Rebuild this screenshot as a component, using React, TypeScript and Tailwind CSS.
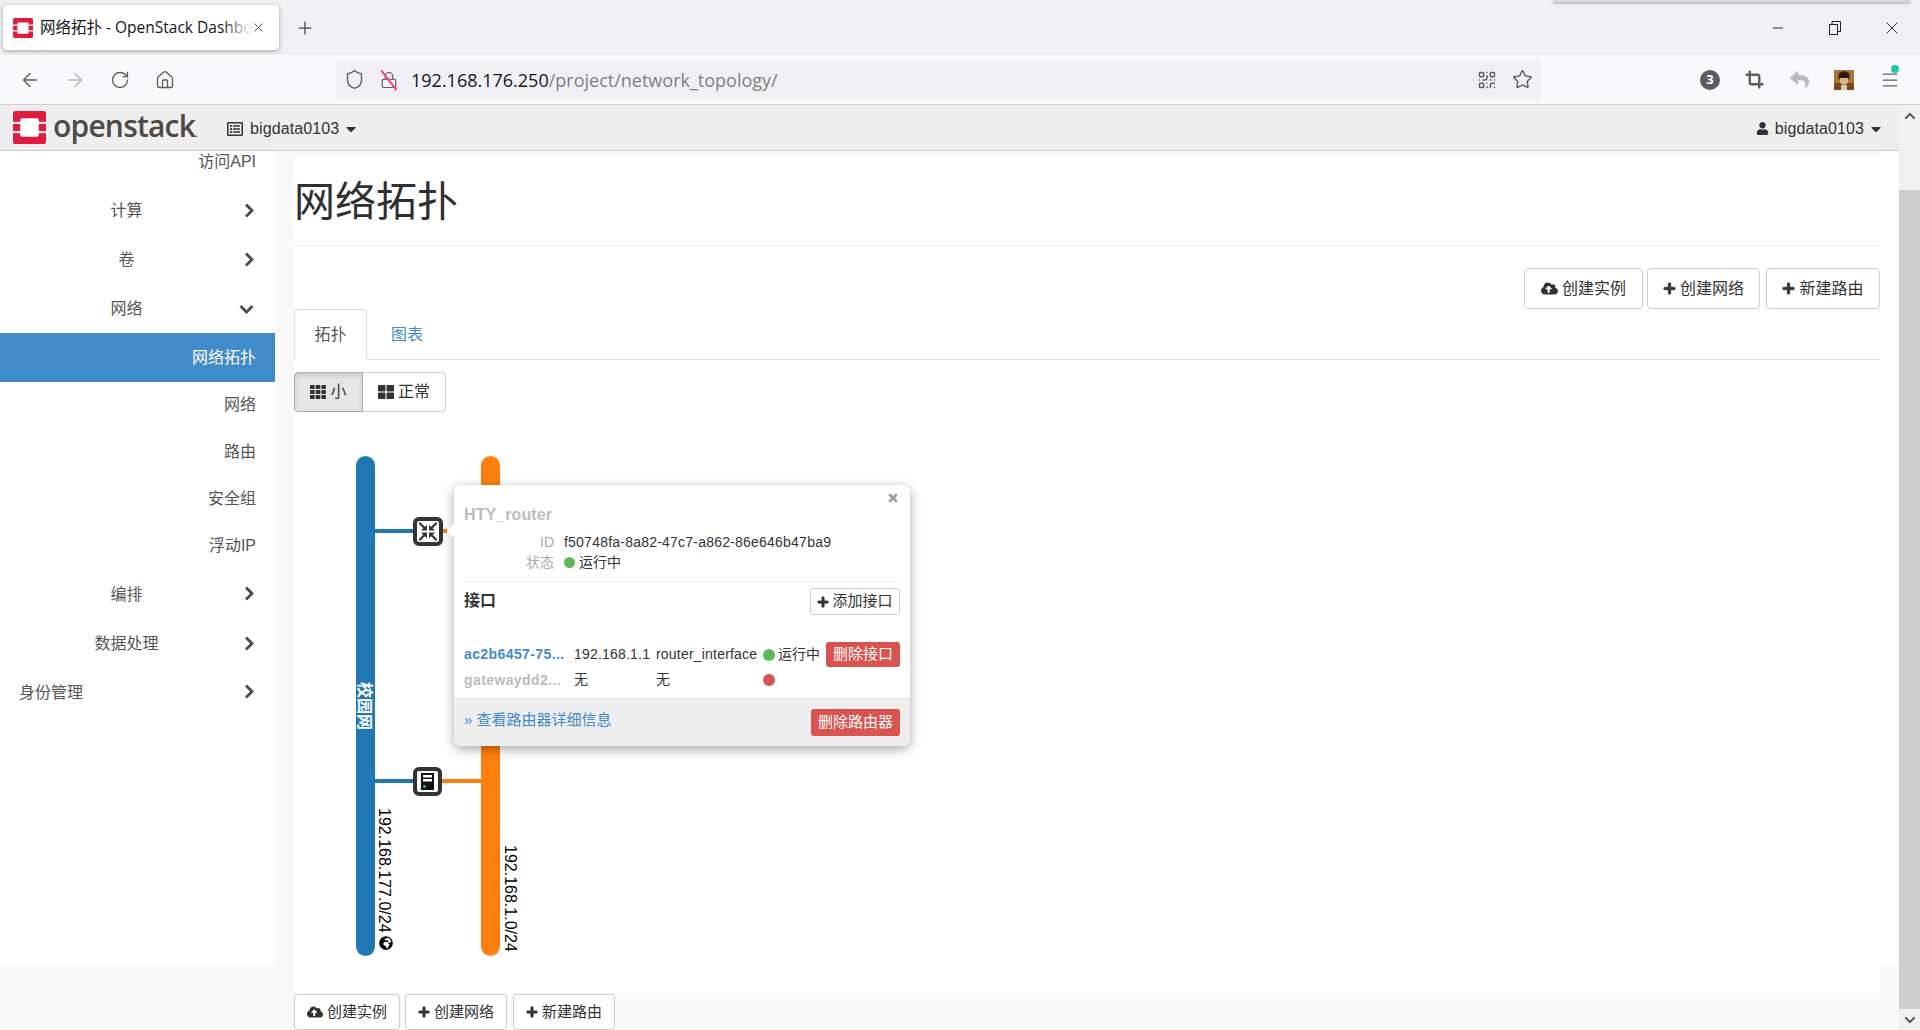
import React from "react";
import { ArrowLeft, ArrowRight, RotateCw, Home, Shield, Lock, Star, Plus, X, Minus, QrCode, Crop, Menu } from "lucide-react";
import { FaCloudUploadAlt, FaPlus, FaTh, FaThLarge, FaChevronRight, FaChevronDown, FaChevronUp, FaUser, FaCaretDown, FaTimes, FaGlobeAfrica, FaReply, FaRegListAlt } from "react-icons/fa";

const SANS = "font-['Liberation_Sans','Noto_Sans_CJK_SC',sans-serif]";

function Logo({ size }: { size: number }) {
  return (
    <svg width={size} height={size} viewBox="0 0 32 32" className="shrink-0">
      <rect width="32" height="32" rx="2.5" fill="#e21b3c" />
      <rect x="7" y="7" width="18" height="18" rx="2" fill="#fff" />
      <rect x="0" y="10.5" width="7" height="2" fill="#fff" />
      <rect x="0" y="19.5" width="7" height="2" fill="#fff" />
      <rect x="25" y="10.5" width="7" height="2" fill="#fff" />
      <rect x="25" y="19.5" width="7" height="2" fill="#fff" />
    </svg>
  );
}

function Avatar() {
  return (
    <svg width="20" height="20" viewBox="0 0 20 20" className="shrink-0">
      <rect width="20" height="20" fill="#a8772f" />
      <rect y="13" width="20" height="7" fill="#7a4a1c" />
      <path d="M4 10 L5 3 L10 1 L15 3 L16 10 L14 8 L6 8 Z" fill="#2b1a12" />
      <path d="M6 8 H14 V13 L10 15 L6 13 Z" fill="#d9b48f" />
      <rect x="7" y="15" width="6" height="5" fill="#d8c8a0" />
    </svg>
  );
}

function RouterIcon() {
  return (
    <div className="w-[30px] h-[29px] rounded-[6px] border-[4px] border-[#333] bg-white flex items-center justify-center">
      <svg width="20" height="19" viewBox="0 0 18 18" fill="#333">
        <path d="M1.5 0 L6 4.5 L8 2.5 V8 H2.5 L4.5 6 L0 1.5 Z" />
        <path d="M16.5 0 L12 4.5 L10 2.5 V8 H15.5 L13.5 6 L18 1.5 Z" />
        <path d="M1.5 18 L6 13.5 L8 15.5 V10 H2.5 L4.5 12 L0 16.5 Z" />
        <path d="M16.5 18 L12 13.5 L10 15.5 V10 H15.5 L13.5 12 L18 16.5 Z" />
      </svg>
    </div>
  );
}

function ServerIcon() {
  return (
    <div className="w-[29px] h-[29px] rounded-[6px] border-[4px] border-[#333] bg-white flex items-center justify-center">
      <svg width="13" height="17" viewBox="0 0 13 17">
        <rect width="13" height="17" fill="#111" />
        <rect x="2" y="2" width="9" height="2.5" fill="#fff" />
        <rect x="2" y="6" width="9" height="2.5" fill="#fff" />
        <circle cx="3.5" cy="13.5" r="1.4" fill="#5cb85c" />
      </svg>
    </div>
  );
}

function ThickPlus({ size }: { size: number }) {
  return <FaPlus size={size} stroke="currentColor" strokeWidth={30} />;
}

function Tab() {
  return (
    <div className="h-[55px] bg-[#f0f0f4] shrink-0 flex items-start relative">
      <div className="mt-[5px] ml-[3px] w-[276px] h-[45px] bg-white rounded-[4px] shadow-[0_1px_4px_rgba(0,0,0,0.35)] flex items-center pl-[10px] relative">
        <Logo size={20} />
        <div className="ml-[7px] w-[212px] overflow-hidden whitespace-nowrap text-[15.5px] text-[#15141a] font-['Open_Sans','Noto_Sans_CJK_SC',sans-serif] relative">
          网络拓扑 - OpenStack Dashbo
          <div className="absolute right-0 top-0 bottom-0 w-[30px] bg-gradient-to-r from-transparent to-white" />
        </div>
        <X size={15} strokeWidth={1.3} className="text-[#333] -ml-[1px]" />
      </div>
      <Plus size={20} strokeWidth={1.5} className="text-[#444] ml-[16px] mt-[18px]" />
      <div className="absolute top-0 left-[1553px] w-[357px] h-[2px] bg-[#d8d8d8] shadow-[0_1px_3px_rgba(0,0,0,0.4)]" />
      <div className="absolute top-0 right-0 h-[55px] flex items-center text-[#222]">
        <div className="w-[57px] flex justify-center"><Minus size={16} strokeWidth={1.4} /></div>
        <div className="w-[57px] flex justify-center">
          <svg width="12" height="14" viewBox="0 0 12 14" fill="none" stroke="#222" strokeWidth="1">
            <rect x="0.5" y="3.5" width="8" height="10" />
            <path d="M3 3.5 V0.5 H11.5 V10.5 H8.5" />
          </svg>
        </div>
        <div className="w-[57px] flex justify-center"><X size={20} strokeWidth={1.1} /></div>
      </div>
    </div>
  );
}

function Toolbar() {
  return (
    <div className="h-[50px] bg-[#f9f9fb] shrink-0 flex items-center border-b border-[#cfcfd2] text-[#5b5b66]">
      <ArrowLeft size={22} strokeWidth={1.5} className="ml-[19px]" />
      <ArrowRight size={22} strokeWidth={1.5} className="ml-[23px] text-[#b5b5bb]" />
      <RotateCw size={20} strokeWidth={1.6} className="ml-[24px]" />
      <Home size={20} strokeWidth={1.6} className="ml-[25px]" />
      <div className="ml-[160px] w-[1206px] h-[40px] bg-[#f0f0f4] rounded-[4px] flex items-center pl-[9px] pr-[8px]">
        <Shield size={21} strokeWidth={1.6} />
        <div className="relative ml-[14px] w-[20px] h-[20px] flex items-center justify-center">
          <Lock size={18} strokeWidth={1.6} />
          <div className="absolute left-[9px] top-[-2px] w-[1.5px] h-[25px] bg-[#ff3b6b] -rotate-[38deg]" />
        </div>
        <div className="ml-[12px] text-[18px] whitespace-nowrap font-['Open_Sans',sans-serif] leading-none">
          <span className="text-[#15141a]">192.168.176.250</span>
          <span className="text-[#7f7f86]">/project/network_topology/</span>
        </div>
        <div className="flex-1" />
        <QrCode size={20} strokeWidth={1.8} />
        <Star size={21} strokeWidth={1.6} className="ml-[15px]" />
      </div>
      <div className="ml-[159px] w-[20px] h-[20px] rounded-full bg-[#5b5b66] text-white text-[13px] font-bold flex items-center justify-center font-['Open_Sans',sans-serif]">3</div>
      <Crop size={19} strokeWidth={3} className="ml-[25px]" />
      <FaReply size={19} className="ml-[26px] text-[#b9b9bf]" />
      <div className="ml-[25px]"><Avatar /></div>
      <div className="relative ml-[26px]">
        <Menu size={20} strokeWidth={1.5} />
        <div className="absolute -top-[5px] left-[11px] w-[8px] h-[8px] rounded-full bg-[#1fc8a0]" />
      </div>
    </div>
  );
}

function NavBar() {
  return (
    <div className={`h-[46px] bg-[#eeeeee] shrink-0 flex items-center border-b border-[#c8c8c8] text-[#333] text-[16px] ${SANS}`}>
      <div className="ml-[13px]"><Logo size={33} /></div>
      <span className="ml-[7px] w-[142px] whitespace-nowrap text-[30px] leading-none tracking-[-0.8px] text-[#4e4a47] font-semibold font-['Open_Sans',sans-serif] -mt-[3px]">openstack<span className="text-[10px] align-baseline">.</span></span>
      <FaRegListAlt size={16} className="ml-[32px] mt-[2px] text-[#333]" />
      <span className="ml-[7px] mt-[2px] tracking-[0.1px]">bigdata0103</span>
      <FaCaretDown size={16} className="ml-[4px] mt-[2px]" />
      <div className="flex-1" />
      <FaUser size={13} className="mt-[2px]" />
      <span className="ml-[6px] mt-[2px] tracking-[0.1px]">bigdata0103</span>
      <FaCaretDown size={16} className="ml-[4px] mr-[15px] mt-[2px]" />
    </div>
  );
}

function SideTop({ label, h, open, left }: { label: string; h: string; open?: boolean; left?: boolean }) {
  return (
    <div className={`flex items-center pt-[1px] ${h}`}>
      <div className={`w-[253px] ${left ? "text-left pl-[19px]" : "text-center"}`}>{label}</div>
      {open ? (
        <FaChevronDown size={15} stroke="currentColor" strokeWidth={25} className="-ml-[14px] text-[#4a4a4a]" />
      ) : (
        <FaChevronRight size={15} stroke="currentColor" strokeWidth={25} className="-ml-[11px] -mt-[2px] text-[#4a4a4a]" />
      )}
    </div>
  );
}

function SideSub({ label, h, active }: { label: string; h: string; active?: boolean }) {
  return (
    <div className={`flex items-center justify-end pr-[19px] ${h} ${active ? "bg-[#428bca] text-white" : ""}`}>{label}</div>
  );
}

function Sidebar() {
  return (
    <div className="w-[294px] shrink-0 flex flex-col text-[#555] text-[16px]">
      <div className="w-[275px] h-[815px] bg-white flex flex-col">
        <SideSub label="访问API" h="h-[22px] mb-[13px]" />
        <SideTop label="计算" h="h-[49px]" />
        <SideTop label="卷" h="h-[49px]" />
        <SideTop label="网络" h="h-[49px]" open />
        <SideSub label="网络拓扑" h="h-[49px]" active />
        <SideSub label="网络" h="h-[46px]" />
        <SideSub label="路由" h="h-[47px]" />
        <SideSub label="安全组" h="h-[47px]" />
        <SideSub label="浮动IP" h="h-[47px]" />
        <SideTop label="编排" h="h-[50px]" />
        <SideTop label="数据处理" h="h-[49px]" />
        <SideTop label="身份管理" h="h-[48px]" left />
      </div>
    </div>
  );
}

function ActionBtn({ icon, label, cls }: { icon: React.ReactNode; label: string; cls: string }) {
  return (
    <div className={`flex items-center justify-center gap-[4px] bg-white border border-[#ccc] rounded-[4px] text-[#333] ${cls}`}>
      {icon}
      <span>{label}</span>
    </div>
  );
}

function Popover() {
  return (
    <div className="absolute left-[160px] top-[73px] w-[456px] h-[261px] bg-white rounded-[7px] shadow-[0_3px_12px_rgba(0,0,0,0.35)] flex flex-col text-[14px] text-[#333]">
      <div className="absolute -left-[5px] top-[41px] w-[10px] h-[10px] bg-white rotate-45" />
      <FaTimes size={12} stroke="currentColor" strokeWidth={25} className="absolute right-[11px] top-[7px] text-[#999]" />
      <div className="px-[10px] pt-[20px] flex flex-col relative">
        <div className="h-[20px] leading-[20px] text-[16px] font-bold text-[#bbb] tracking-[0.1px]">HTY_router</div>
        <div className="mt-[7px] h-[20px] flex items-center">
          <div className="w-[90px] text-right text-[#aaa]">ID</div>
          <div className="ml-[10px] tracking-[0.22px]">f50748fa-8a82-47c7-a862-86e646b47ba9</div>
        </div>
        <div className="h-[20px] flex items-center">
          <div className="w-[90px] text-right text-[#aaa]">状态</div>
          <div className="ml-[10px] w-[11px] h-[11px] rounded-full bg-[#5cb85c]" />
          <div className="ml-[4px]">运行中</div>
        </div>
        <div className="mt-[9px] border-t border-[#eee]" />
        <div className="mt-[6px] flex items-start justify-between">
          <div className="text-[16px] font-bold leading-[22px] mt-[2px]">接口</div>
          <div className="w-[90px] h-[27px] bg-white border border-[#ccc] rounded-[3px] flex items-center justify-center gap-[3px] text-[15px]">
            <ThickPlus size={12} />
            <span>添加接口</span>
          </div>
        </div>
        <div className="mt-[27px] grid grid-cols-[110px_82px_107px_63px_74px] items-center">
          <div className="h-[25px] flex items-center font-bold text-[#428bca] tracking-[0.4px]">ac2b6457-75...</div>
          <div className="tracking-[0.2px]">192.168.1.1</div>
          <div className="tracking-[0.2px]">router_interface</div>
          <div className="flex items-center">
            <div className="w-[12px] h-[12px] rounded-full bg-[#5cb85c]" />
            <span className="ml-[3px]">运行中</span>
          </div>
          <div className="h-[25px] bg-[#d9534f] text-white rounded-[3px] flex items-center justify-center text-[15px]">删除接口</div>
          <div className="h-[26px] flex items-center font-bold text-[#bbb] tracking-[0.4px]">gatewaydd2...</div>
          <div className="-mt-[2px]">无</div>
          <div className="-mt-[2px]">无</div>
          <div><div className="w-[12px] h-[12px] rounded-full bg-[#d9534f]" /></div>
          <div />
        </div>
      </div>
      <div className="mt-auto h-[48px] bg-[#eeeeee] border-t border-[#ddd] rounded-b-[7px] flex items-center justify-between px-[10px]">
        <div className="text-[15px] text-[#428bca] -mt-[4px]">» 查看路由器详细信息</div>
        <div className="w-[89px] h-[27px] bg-[#d9534f] text-white rounded-[3px] flex items-center justify-center text-[15px]">删除路由器</div>
      </div>
    </div>
  );
}

function Diagram() {
  return (
    <div className="relative flex-1">
      <div className="absolute left-[62px] top-[44px] w-[19px] h-[500px] rounded-[10px] bg-[#1f77b4]" />
      <div className="absolute left-[187px] top-[44px] w-[19px] h-[500px] rounded-[10px] bg-[#ff7f0e]" />
      <div className="absolute left-[81px] top-[117px] w-[38px] h-[4px] bg-[#1f77b4]" />
      <div className="absolute left-[81px] top-[367px] w-[38px] h-[4px] bg-[#1f77b4]" />
      <div className="absolute left-[148px] top-[367px] w-[39px] h-[4px] bg-[#ff7f0e]" />
      <div className="absolute left-[149px] top-[117px] w-[4px] h-[4px] bg-[#ff7f0e]" />
      <div className="absolute left-[119px] top-[105px]"><RouterIcon /></div>
      <div className="absolute left-[119px] top-[355px]"><ServerIcon /></div>
      <div className="absolute left-[62px] top-[270px] w-[17px] text-center text-white text-[16px] font-bold leading-[17px] [writing-mode:vertical-rl] [text-orientation:sideways]">校园网</div>
      <div className="absolute left-[82px] top-[396px] text-[16px] text-black leading-[17px] [writing-mode:vertical-rl] whitespace-nowrap">192.168.177.0/24</div>
      <FaGlobeAfrica size={14} className="absolute left-[85px] top-[524px] text-black" />
      <div className="absolute left-[208px] top-[433px] text-[16px] text-black leading-[17px] [writing-mode:vertical-rl] whitespace-nowrap">192.168.1.0/24</div>
      <Popover />
    </div>
  );
}

function Main() {
  return (
    <div className="w-[1586px] shrink-0 flex flex-col">
      <div className="h-[5px] bg-[#f9f9f9] rounded-b-[5px] shrink-0" />
      <div className="h-[841px] bg-white flex flex-col">
        <div className="h-[90px] border-b border-[#eee] flex items-center shrink-0">
          <h1 className="text-[41px] leading-none text-[#2f2f2f] mt-[4px]">网络拓扑</h1>
        </div>
        <div className="mt-[22px] flex justify-end text-[16px] shrink-0">
          <ActionBtn cls="w-[119px] h-[41px]" icon={<FaCloudUploadAlt size={17} />} label="创建实例" />
          <ActionBtn cls="w-[113px] h-[41px] ml-[4px]" icon={<ThickPlus size={13} />} label="创建网络" />
          <ActionBtn cls="w-[114px] h-[41px] ml-[6px]" icon={<ThickPlus size={13} />} label="新建路由" />
        </div>
        <div className="h-[51px] border-b border-[#ddd] flex shrink-0 text-[16px]">
          <div className="w-[73px] h-[51px] bg-white border border-b-white border-[#ddd] rounded-t-[4px] flex items-center justify-center text-[#555]">拓扑</div>
          <div className="ml-[24px] h-[51px] flex items-center text-[#428bca]">图表</div>
        </div>
        <div className="mt-[12px] flex text-[16px] text-[#333] shrink-0">
          <div className="w-[69px] h-[40px] bg-[#e6e6e6] border border-[#adadad] rounded-l-[4px] shadow-[inset_0_3px_5px_rgba(0,0,0,0.125)] flex items-center justify-center gap-[4px]">
            <FaTh size={16} />
            <span>小</span>
          </div>
          <div className="w-[83px] h-[40px] bg-white border border-l-0 border-[#ccc] rounded-r-[4px] flex items-center justify-center gap-[4px]">
            <FaThLarge size={16} />
            <span>正常</span>
          </div>
        </div>
        <Diagram />
      </div>
      <div className="flex text-[15px] pt-[1px]">
        <ActionBtn cls="w-[106px] h-[36px]" icon={<FaCloudUploadAlt size={16} />} label="创建实例" />
        <ActionBtn cls="w-[102px] h-[36px] ml-[5px]" icon={<ThickPlus size={12} />} label="创建网络" />
        <ActionBtn cls="w-[102px] h-[36px] ml-[6px]" icon={<ThickPlus size={12} />} label="新建路由" />
      </div>
    </div>
  );
}

function ScrollBar() {
  return (
    <div className="w-[21px] shrink-0 bg-[#f0f0f0] flex flex-col items-center">
      <FaChevronUp size={12} className="mt-[5px] text-[#505050]" />
      <div className="mt-[68px] w-full h-[819px] bg-[#cdcdcd]" />
      <FaChevronDown size={12} className="mt-[5px] text-[#505050]" />
    </div>
  );
}

export default function App() {
  return (
    <div className={`w-[1920px] h-[1030px] overflow-hidden flex flex-col bg-[#f9f9f9] ${SANS}`}>
      <Tab />
      <Toolbar />
      <div className="flex-1 flex min-h-0">
        <div className="flex-1 flex flex-col min-w-0">
          <NavBar />
          <div className="flex-1 flex min-h-0">
            <Sidebar />
            <Main />
            <div className="w-[19px] h-[815px] bg-white shrink-0" />
          </div>
        </div>
        <ScrollBar />
      </div>
    </div>
  );
}
